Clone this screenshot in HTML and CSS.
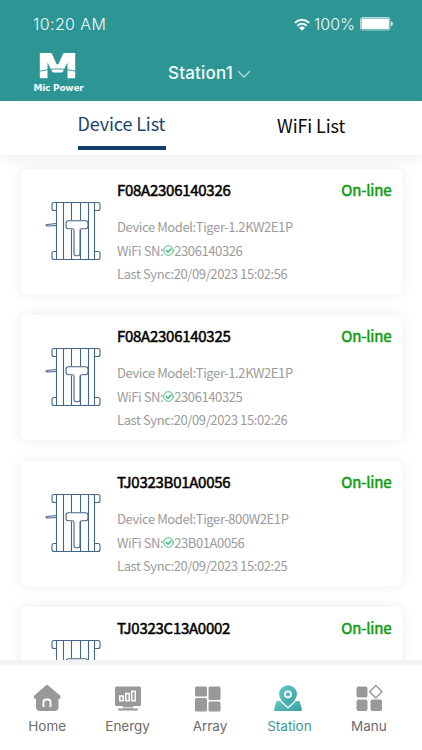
FILE: index.html
```html
<!DOCTYPE html>
<html lang="en">
<head>
<meta charset="utf-8">
<meta name="viewport" content="width=device-width, initial-scale=1">
<title>Mic Power</title>
<link rel="stylesheet" href="styles.css">
</head>
<body>
<svg class="defs" width="0" height="0" aria-hidden="true">
  <symbol id="device" viewBox="0 0 58 60">
    <g fill="none" stroke="#446489" stroke-width="1.1" stroke-linejoin="round">
      <path d="M12.500 1.5h38v57h-38zM19.500 1.5v57M27.500 1.5v18M36.500 1.5v18M27.500 28.5v30M36.500 28.5v30M44.500 1.5v57"/>
      <path d="M12.500 1.5H10q-2 0-2 2v4q0 2 2 2h2.500M50.500 1.500h3.500q2 0 2 2v4q0 2-2 2h-3.500M12.500 50.500H10q-2 0-2 2v4q0 2 2 2h2.500M50.500 50.500h3.500q2 0 2 2v4q0 2-2 2h-3.500"/>
      <path d="M12.500 22.500l-9.500 1q-2 .7 0 1.500l9.500-.5"/>
      <path fill="#fff" d="M24.500 19.800h17q2.500 0 2.500 2.500v3q0 2.500-2.500 2.500h-4q-1.500 0-1.500 2v22.500q0 2.500-2 2.500h-2q-2 0-2-2.500v-22.500q0-2-1.500-2h-4q-2.500 0-2.500-2.500v-3q0-2.500 2.500-2.500z"/>
    </g>
  </symbol>
  <symbol id="check" viewBox="0 0 11 11">
    <g fill="none" stroke="#2fb96c" stroke-linecap="round"><circle cx="5.500" cy="5.500" r="4.800" stroke-width=".9"/><path d="M3.200 5.500l1.800 1.700 3-3.200" stroke-width="1.400"/></g>
  </symbol>
</svg>
<div class="screen">
  <header class="header">
    <div class="status">
      <span class="time">10:20 AM</span>
      <span class="indicators">
        <svg class="wifi" width="16" height="13" viewBox="0 0 16 13"><g fill="none" stroke="#eefafa" stroke-width="2"><path d="M.8 4.700Q8-1.300 15.200 4.700M3.300 7.700q4.700-3.800 9.400 0"/></g><path d="M5 9.700q3-2.200 6 0L8 12.800z" fill="#fff"/></svg>
        <span class="percent">100%</span>
        <svg class="battery" width="33" height="14" viewBox="0 0 33 14"><rect x=".5" y=".5" width="29.500" height="12.500" rx="2" fill="none" stroke="#b4dcdc"/><rect x="1.500" y="1.500" width="27.500" height="10.500" rx="1" fill="#fff"/><path d="M31 4.500q2 .5 2 2.300T31 9z" fill="#d5eded"/></svg>
      </span>
    </div>
    <div class="bar">
      <div class="brand">
        <svg width="37" height="26" viewBox="0 0 37 26"><path fill="#fff" d="M.8 0h10.700q1 0 1.500 1l4.300 9.500q.4.900 1.200.9t1.200-.9L24 1q.5-1 1.500-1h10.700v25.300h-7.700V9.500l-4.300 8.500q-.6 1.500-1.800 1.500h-7.800q-1.200 0-1.800-1.500L8.500 9.500v15.800H.8z"/><path d="M0 18.300Q18.500 13.500 37 18.300" fill="none" stroke="#2e9595" stroke-width=".9"/></svg>
        <span>Mic Power</span>
      </div>
      <div class="station"><span>Station1</span><svg width="14" height="9" viewBox="0 0 14 9"><path d="M1 1l6 6 6-6" fill="none" stroke="#add9d9" stroke-width="1.400"/></svg></div>
    </div>
  </header>
  <nav class="tabs">
    <span class="tab active">Device List</span>
    <span class="tab wifi-tab">WiFi List</span>
  </nav>
  <main class="list">
    <article class="card">
      <svg class="device"><use href="#device"/></svg>
      <div class="info">
        <div class="title"><span class="name">F08A2306140326</span><span class="online">On-line</span></div>
        <p>Device Model:Tiger-1.2KW2E1P</p>
        <p>WiFi SN:<svg class="check"><use href="#check"/></svg>2306140326</p>
        <p>Last Sync:20/09/2023 15:02:56</p>
      </div>
    </article>
    <article class="card">
      <svg class="device"><use href="#device"/></svg>
      <div class="info">
        <div class="title"><span class="name">F08A2306140325</span><span class="online">On-line</span></div>
        <p>Device Model:Tiger-1.2KW2E1P</p>
        <p>WiFi SN:<svg class="check"><use href="#check"/></svg>2306140325</p>
        <p>Last Sync:20/09/2023 15:02:26</p>
      </div>
    </article>
    <article class="card">
      <svg class="device"><use href="#device"/></svg>
      <div class="info">
        <div class="title"><span class="name">TJ0323B01A0056</span><span class="online">On-line</span></div>
        <p>Device Model:Tiger-800W2E1P</p>
        <p>WiFi SN:<svg class="check"><use href="#check"/></svg>23B01A0056</p>
        <p>Last Sync:20/09/2023 15:02:25</p>
      </div>
    </article>
    <article class="card">
      <svg class="device"><use href="#device"/></svg>
      <div class="info">
        <div class="title"><span class="name">TJ0323C13A0002</span><span class="online">On-line</span></div>
      </div>
    </article>
  </main>
  <footer class="bottom">
    <a class="item"><svg width="28" height="28" viewBox="0 0 28 28"><path fill="#999" stroke="#999" stroke-width="2" stroke-linejoin="round" d="M14 1.800L2 12.200v1.500h2V23q0 3 3 3h14.500q3 0 3-3v-9.300H26.500v-1.500z"/><path d="M10.500 23v-5q0-2.500 2.500-2.500h2q2.500 0 2.500 2.500v5" fill="none" stroke="#fff" stroke-width="1.800"/></svg><span>Home</span></a>
    <a class="item"><svg width="28" height="28" viewBox="0 0 28 28"><rect x="1" y="2.500" width="26" height="19.500" rx="1.500" fill="#999"/><path d="M8.500 22h11l-1 2.500H23q1 0 1 1t-1 1H5q-1 0-1-1t1-1h4.500z" fill="#999"/><g fill="none" stroke="#fff" stroke-width="1.500"><path d="M5.800 12h3.400v4.700H5.800zM11.800 9.500h3.400v7.200h-3.400zM17.800 7.300h3.400v9.400h-3.400z"/><path d="M9.500 23.700h9" stroke-width=".8"/></g></svg><span>Energy</span></a>
    <a class="item array"><svg width="28" height="28" viewBox="0 0 28 28"><g fill="#999"><rect x="1" y="2.500" width="12" height="10" rx="1.500"/><rect x="14.500" y="2.500" width="12" height="13.500" rx="1.500"/><rect x="1" y="14" width="12" height="13.500" rx="1.500"/><rect x="14.500" y="17.500" width="12" height="10" rx="1.500"/></g></svg><span>Array</span></a>
    <a class="item selected"><svg width="28" height="28" viewBox="0 0 28 28"><defs><linearGradient id="pin" x1="0" y1="0" x2="1" y2="1"><stop stop-color="#63c9c8"/><stop offset="1" stop-color="#3a9f9f"/></linearGradient></defs><path fill="url(#pin)" d="M3.500 17h21q1 0 1.400 1l2 7.500q.3 1.500-1.200 1.500H1.300q-1.500 0-1.200-1.500l2-7.500q.4-1 1.400-1z"/><path fill="url(#pin)" stroke="#fff" stroke-width="1.300" d="M14 .7c-5.500 0-9.600 4.100-9.600 9.400 0 5.600 4.600 9.300 9.600 13.600 5-4.300 9.600-8 9.600-13.600C23.600 4.800 19.500.7 14 .7z"/><circle cx="14" cy="10.300" r="3" fill="none" stroke="#fff" stroke-width="1.800"/></svg><span>Station</span></a>
    <a class="item"><svg width="28" height="28" viewBox="0 0 28 28"><g fill="#999"><rect x="1.500" y="2.500" width="11" height="11" rx="2"/><rect x="1.500" y="15.500" width="11" height="11.500" rx="2"/><rect x="15.500" y="15.500" width="11.500" height="11.500" rx="2"/></g><path d="M20.800 1.500l6.200 6.200-6.200 6.200-6.200-6.200z" fill="none" stroke="#999" stroke-width="1.400" stroke-linejoin="round"/></svg><span>Manu</span></a>
  </footer>
</div>
</body>
</html>
```
FILE: styles.css
```css
* { box-sizing: border-box; }
body { margin: 0; font-family: "Noto Sans CJK SC", "Noto Sans", sans-serif; background: #fff; }
.defs { position: absolute; }
svg { display: block; flex: none; }
.screen { width: 422px; height: 750px; overflow: hidden; display: flex; flex-direction: column; }
.header { height: 101px; flex: none; background: #2e9595; color: #f2fbfb; font-family: Inter, sans-serif; }
.status { height: 48px; padding: 0 29px 0 33px; display: flex; align-items: center; justify-content: space-between; font-size: 16px; line-height: 20px; font-weight: 350; }
.time { letter-spacing: 0.4px; }
.indicators { display: flex; align-items: center; }
.percent { margin-left: 4px; width: 42px; letter-spacing: 0; }
.battery { margin-left: 4px; }
.bar { display: flex; padding-left: 32px; }
.brand { width: 53px; padding-top: 5px; display: flex; flex-direction: column; align-items: center; font: bold 9px/12px "DejaVu Sans", sans-serif; white-space: nowrap; }
.brand svg { margin-right: 2px; }
.brand span { margin-top: 3px; letter-spacing: -0.25px; }
.station { margin-left: 83px; padding-top: 14px; display: flex; align-items: flex-start; font-size: 17px; line-height: 22px; font-weight: 500; letter-spacing: 0.2px; }
.station svg { margin: 8px 0 0 4px; }
.tabs { height: 54px; flex: none; position: relative; z-index: 1; display: flex; padding-left: 77.500px; background: #fff; box-shadow: 0 5px 12px rgba(0, 0, 0, 0.06); font-size: 18px; line-height: 28px; letter-spacing: -0.12px; white-space: nowrap; }
.tab { color: #0a0a0a; }
.active { width: 88px; height: 49px; padding-top: 8px; color: #1d436c; border-bottom: 4px solid #123e6d; }
.wifi-tab { margin-left: 111.500px; padding-top: 10px; }
.list { flex: 1; min-height: 0; overflow: hidden; padding: 13.500px 20px 0 21px; display: flex; flex-direction: column; gap: 21px; }
.card { height: 125px; flex: none; display: flex; padding: 0 10.500px 0 23px; background: #fff; border-radius: 5px; box-shadow: 0 0 14px rgba(0, 0, 0, 0.08); }
.device { width: 58px; height: 60px; margin-top: 32.500px; }
.info { flex: 1; padding: 9.500px 0 0 15px; }
.title { display: flex; justify-content: space-between; height: 37px; line-height: 24px; font-size: 15px; letter-spacing: -0.27px; white-space: nowrap; }
.name { color: #000; -webkit-text-stroke: 0.5px #000; }
.online { color: #0b9b0b; letter-spacing: -0.15px; -webkit-text-stroke: 0.5px #0b9b0b; }
.info p { margin: 0; display: flex; align-items: center; height: 23.500px; font-size: 13px; line-height: 23.500px; letter-spacing: -0.4px; color: #9b9b9b; white-space: pre; }
.check { width: 11px; height: 11px; }
.bottom { height: 90px; flex: none; border-top: 5px solid #f3f3f3; background: #fff; padding: 19px 13px 0 7px; display: flex; font-family: Inter, sans-serif; }
.item { width: 80.600px; display: flex; flex-direction: column; align-items: center; color: #6c6c6c; font-size: 13.500px; line-height: 18px; }
.item span { margin-top: 5px; letter-spacing: 0; }
.array span { padding-left: 4px; }
.selected { color: #3b9898; }
.selected span { padding-left: 2px; }
```
